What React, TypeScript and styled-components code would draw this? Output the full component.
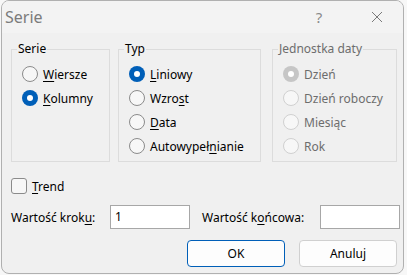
import React from "react";
import styled, { createGlobalStyle, css } from "styled-components";

const Global = createGlobalStyle`
  html, body { margin: 0; padding: 0; background: #f7f7f7; }
  body { font-family: "Noto Sans", "Liberation Sans", sans-serif; font-size: 12px; color: #000; }
  * { box-sizing: border-box; }
`;

const Window = styled.div`
  margin-left: 1px;
  width: 403px;
  height: 274px;
  border: 1px solid #b0b0b0;
  border-radius: 8px;
  background: #f0f0f0;
  overflow: hidden;
  display: flex;
  flex-direction: column;
`;

const TitleBar = styled.div`
  height: 32px;
  flex: none;
  background: #f3f3f3;
  display: flex;
  align-items: center;
  padding-left: 3px;
`;

const Title = styled.div`
  flex: 1;
  font-size: 16px;
  color: #7b7b7b;
  line-height: 20px;
`;

const TitleButton = styled.div<{ $w: number }>`
  width: ${(p) => p.$w}px;
  height: 32px;
  display: flex;
  align-items: center;
  justify-content: center;
  color: #8a8a8a;
  font-size: 15px;
`;

const Body = styled.div`
  flex: 1;
  display: flex;
  flex-direction: column;
  padding: 8px 0 0 8px;
`;

const GroupRow = styled.div`
  display: flex;
  align-items: flex-start;
`;

const Group = styled.fieldset<{ $w: number; $ml: number }>`
  width: ${(p) => p.$w}px;
  height: 121px;
  margin: 0 0 0 ${(p) => p.$ml}px;
  padding: 7px 0 0 10px;
  border: 1px solid #dcdcdc;
  display: flex;
  flex-direction: column;
  gap: 4px;
`;

const Legend = styled.legend<{ $disabled?: boolean }>`
  margin-left: -5px;
  padding: 0 1px;
  line-height: 16px;
  color: ${(p) => (p.$disabled ? "#6d6d6d" : "#000")};
`;

const OptionRow = styled.label<{ $disabled?: boolean }>`
  display: flex;
  align-items: center;
  gap: 5px;
  height: 20px;
  color: ${(p) => (p.$disabled ? "#6d6d6d" : "#000")};
`;

const RadioDot = styled.span<{ $checked?: boolean; $disabled?: boolean }>`
  width: 16px;
  height: 16px;
  border-radius: 50%;
  flex: none;
  position: relative;
  ${(p) =>
    p.$checked
      ? css`
          background: ${p.$disabled ? "#c6c6c6" : "#005fb8"};
          &::after {
            content: "";
            position: absolute;
            left: 5px;
            top: 5px;
            width: 6px;
            height: 6px;
            border-radius: 50%;
            background: #fff;
          }
        `
      : css`
          background: #f7f7f7;
          border: 1px solid ${p.$disabled ? "#d0d0d0" : "#8b8b8b"};
        `}
`;

const U = styled.span`
  text-decoration: underline;
  text-underline-offset: 2px;
`;

const CheckRow = styled.label`
  display: flex;
  align-items: center;
  gap: 5px;
  margin-top: 15px;
  margin-left: 1px;
  height: 18px;
`;

const CheckBox = styled.span`
  width: 16px;
  height: 16px;
  border: 1px solid #8b8b8b;
  border-radius: 3px;
  background: #f7f7f7;
`;

const FieldRow = styled.div`
  display: flex;
  align-items: center;
  margin-top: 10px;
  margin-left: 1px;
`;

const FieldLabel = styled.span<{ $w: number; $ml?: number }>`
  width: ${(p) => p.$w}px;
  margin-left: ${(p) => p.$ml ?? 0}px;
`;

const Input = styled.div<{ $w: number }>`
  width: ${(p) => p.$w}px;
  height: 24px;
  background: #fff;
  border: 1px solid #a7a7a7;
  padding: 2px 4px;
  line-height: 18px;
`;

const ButtonRow = styled.div`
  display: flex;
  justify-content: flex-end;
  gap: 14px;
  margin-top: 11px;
  padding-right: 6px;
`;

const Button = styled.div<{ $primary?: boolean }>`
  width: 98px;
  height: 27px;
  border-radius: 4px;
  background: #fdfdfd;
  border: 1px solid ${(p) => (p.$primary ? "#005fb8" : "#d0d0d0")};
  display: flex;
  align-items: center;
  justify-content: center;
`;

export default function App() {
  return (
    <>
      <Global />
      <Window>
        <TitleBar>
          <Title>Serie</Title>
          <TitleButton $w={64}>?</TitleButton>
          <TitleButton $w={52}>
            <svg width="12" height="12" viewBox="0 0 12 12">
              <path d="M1 1L11 11M11 1L1 11" stroke="#7a7a7a" strokeWidth="1" />
            </svg>
          </TitleButton>
        </TitleBar>
        <Body>
          <GroupRow>
            <Group $w={99} $ml={1}>
              <Legend>Serie</Legend>
              <OptionRow>
                <RadioDot />
                <span>
                  <U>W</U>iersze
                </span>
              </OptionRow>
              <OptionRow>
                <RadioDot $checked />
                <span>
                  <U>K</U>olumny
                </span>
              </OptionRow>
            </Group>
            <Group $w={143} $ml={8}>
              <Legend>Typ</Legend>
              <OptionRow>
                <RadioDot $checked />
                <span>
                  <U>L</U>iniowy
                </span>
              </OptionRow>
              <OptionRow>
                <RadioDot />
                <span>
                  Wzro<U>s</U>t
                </span>
              </OptionRow>
              <OptionRow>
                <RadioDot />
                <span>
                  <U>D</U>ata
                </span>
              </OptionRow>
              <OptionRow>
                <RadioDot />
                <span>
                  Autowypeł<U>n</U>ianie
                </span>
              </OptionRow>
            </Group>
            <Group $w={125} $ml={11}>
              <Legend $disabled>Jednostka daty</Legend>
              <OptionRow $disabled>
                <RadioDot $checked $disabled />
                <span>Dzień</span>
              </OptionRow>
              <OptionRow $disabled>
                <RadioDot $disabled />
                <span>Dzień roboczy</span>
              </OptionRow>
              <OptionRow $disabled>
                <RadioDot $disabled />
                <span>Miesiąc</span>
              </OptionRow>
              <OptionRow $disabled>
                <RadioDot $disabled />
                <span>Rok</span>
              </OptionRow>
            </Group>
          </GroupRow>
          <CheckRow>
            <CheckBox />
            <span>
              <U>T</U>rend
            </span>
          </CheckRow>
          <FieldRow>
            <FieldLabel $w={99}>
              Wartość krok<U>u</U>:
            </FieldLabel>
            <Input $w={80}>1</Input>
            <FieldLabel $w={118} $ml={12}>
              Wartość k<U>o</U>ńcowa:
            </FieldLabel>
            <Input $w={80}></Input>
          </FieldRow>
          <ButtonRow>
            <Button $primary>OK</Button>
            <Button>Anuluj</Button>
          </ButtonRow>
        </Body>
      </Window>
    </>
  );
}
